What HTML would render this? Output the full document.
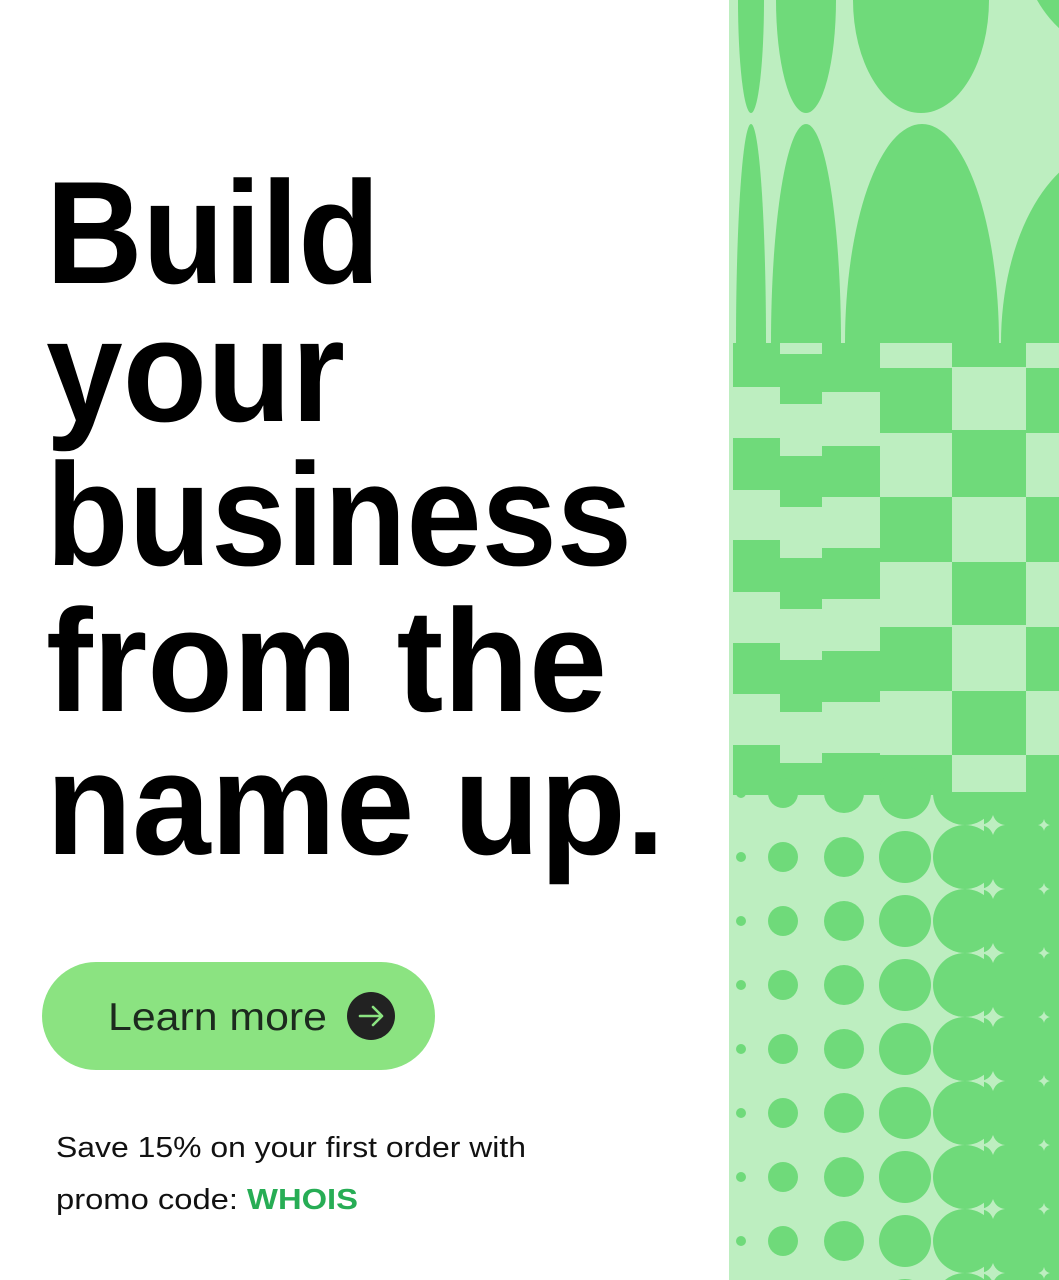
<!DOCTYPE html>
<html><head><meta charset="utf-8"><style>
html,body{margin:0;padding:0;background:#fff;}
body{width:1059px;height:1280px;overflow:hidden;position:relative;}
svg{position:absolute;left:0;top:0;}
</style></head><body>
<svg width="1059" height="1280" viewBox="0 0 1059 1280" xmlns="http://www.w3.org/2000/svg">
<defs>
<g id="r" fill="#6fda7a">
<circle cx="12" cy="0" r="5"/>
<circle cx="54" cy="0" r="15"/>
<circle cx="115" cy="0" r="20"/>
<circle cx="176" cy="0" r="26"/>
<circle cx="236" cy="0" r="32"/>
</g>
<g id="s" fill="#bdeec0">
<path d="M251 0 Q261 -1 264 -10 Q267 -1 276 0 Q267 1 264 10 Q261 1 251 0Z"/>
<path d="M309 0 Q314 -1 315 -6 Q316 -1 321 0 Q316 1 315 6 Q314 1 309 0Z"/>
</g>
</defs>
<rect x="0" y="0" width="1059" height="1280" fill="#fff"/>
<g font-family="Liberation Sans, sans-serif" font-weight="bold" font-size="146" fill="#000">
<text x="46" y="283" textLength="334" lengthAdjust="spacingAndGlyphs">Build</text>
<text x="46" y="421" textLength="299" lengthAdjust="spacingAndGlyphs">your</text>
<text x="46" y="565" textLength="586" lengthAdjust="spacingAndGlyphs">business</text>
<text x="46" y="711" textLength="561" lengthAdjust="spacingAndGlyphs">from the</text>
<text x="46" y="854" textLength="619" lengthAdjust="spacingAndGlyphs">name up.</text>
</g>
<rect x="42" y="962" width="393" height="108" rx="54" fill="#8be381"/>
<text x="108" y="1030" font-family="Liberation Sans, sans-serif" font-size="39" fill="#1c2a1e" textLength="219" lengthAdjust="spacingAndGlyphs">Learn more</text>
<circle cx="371" cy="1016" r="24" fill="#222"/>
<path d="M360 1016 H382 M373 1007 L382 1016 L373 1025" stroke="#8be381" stroke-width="2.6" fill="none" stroke-linecap="round" stroke-linejoin="round"/>
<g font-family="Liberation Sans, sans-serif" font-size="29" fill="#111">
<text x="56" y="1157" textLength="470" lengthAdjust="spacingAndGlyphs">Save 15% on your first order with</text>
<text x="56" y="1209" textLength="302" lengthAdjust="spacingAndGlyphs">promo code: <tspan fill="#27ad55" font-weight="bold">WHOIS</tspan></text>
</g>
<g transform="translate(729,0)">
<rect x="0" y="0" width="330" height="1280" fill="#bdeec0"/>
<g fill="#6fda7a">
<ellipse cx="22" cy="0" rx="13" ry="113"/>
<ellipse cx="77" cy="0" rx="30" ry="113"/>
<ellipse cx="192" cy="0" rx="68" ry="113"/>
<ellipse cx="395" cy="-70" rx="105" ry="125"/>
<ellipse cx="22" cy="343" rx="15" ry="219"/>
<ellipse cx="77" cy="343" rx="35" ry="219"/>
<ellipse cx="193" cy="343" rx="77" ry="219"/>
<ellipse cx="385" cy="343" rx="113" ry="195"/>
</g>
<rect x="4" y="343" width="326" height="452" fill="#bdeec0"/>
<g fill="#6fda7a">
<rect x="4" y="343" width="47" height="44"/>
<rect x="4" y="438" width="47" height="52"/>
<rect x="4" y="540" width="47" height="52"/>
<rect x="4" y="643" width="47" height="51"/>
<rect x="4" y="745" width="47" height="50"/>
<rect x="51" y="354" width="42" height="50"/>
<rect x="51" y="456" width="42" height="51"/>
<rect x="51" y="558" width="42" height="51"/>
<rect x="51" y="660" width="42" height="52"/>
<rect x="51" y="763" width="42" height="32"/>
<rect x="93" y="343" width="58" height="49"/>
<rect x="93" y="446" width="58" height="51"/>
<rect x="93" y="548" width="58" height="51"/>
<rect x="93" y="651" width="58" height="51"/>
<rect x="93" y="753" width="58" height="42"/>
<rect x="151" y="368" width="72" height="65"/>
<rect x="151" y="497" width="72" height="65"/>
<rect x="151" y="627" width="72" height="64"/>
<rect x="151" y="755" width="72" height="40"/>
<rect x="223" y="343" width="74" height="24"/>
<rect x="223" y="430" width="74" height="67"/>
<rect x="223" y="562" width="74" height="63"/>
<rect x="223" y="691" width="74" height="64"/>
<rect x="297" y="368" width="33" height="65"/>
<rect x="297" y="497" width="33" height="65"/>
<rect x="297" y="627" width="33" height="64"/>
<rect x="297" y="755" width="33" height="40"/>
</g>
<rect x="255" y="792" width="75" height="488" fill="#6fda7a"/>
<use href="#r" y="793"/>
<use href="#r" y="857"/>
<use href="#r" y="921"/>
<use href="#r" y="985"/>
<use href="#r" y="1049"/>
<use href="#r" y="1113"/>
<use href="#r" y="1177"/>
<use href="#r" y="1241"/>
<use href="#r" y="1305"/>
<use href="#s" y="825"/>
<use href="#s" y="889"/>
<use href="#s" y="953"/>
<use href="#s" y="1017"/>
<use href="#s" y="1081"/>
<use href="#s" y="1145"/>
<use href="#s" y="1209"/>
<use href="#s" y="1273"/>
<rect x="223" y="755" width="74" height="37" fill="#bdeec0"/>
</g>
</svg>
</body></html>
